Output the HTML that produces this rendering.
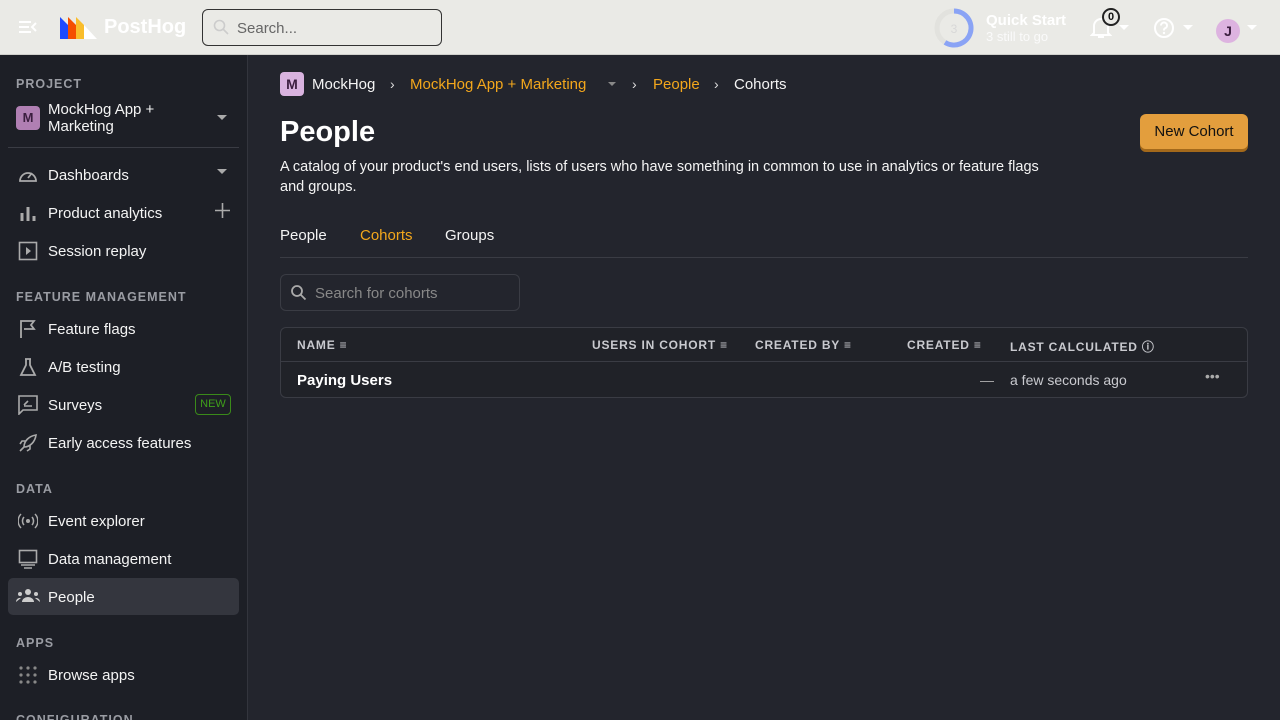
<!DOCTYPE html>
<html><head><meta charset="utf-8"><style>
*{box-sizing:border-box;margin:0;padding:0}
html,body{width:1280px;height:720px;overflow:hidden}
body{background:#23252d;font-family:"Liberation Sans",sans-serif;color:#f4f4f4;position:relative}
.top{position:absolute;left:0;top:0;width:1280px;height:55px;background:#eaeae6;border-bottom:1px solid #d0d0cc}
.side{position:absolute;left:0;top:55px;width:248px;height:665px;background:#1d1f26;border-right:1px solid #33353d}
.a{position:absolute;white-space:nowrap}
.sec{font-size:12.5px;font-weight:bold;letter-spacing:1px;color:#9a9ca3}
.it{font-size:15px;color:#f4f4f4}
.ic{position:absolute;left:18px;width:20px;height:20px}
.th{font-size:12px;font-weight:bold;letter-spacing:.8px;color:#c9cacf}
</style></head><body>
<div class="top">
 <svg class="a" style="left:18px;top:18px" width="20" height="18" viewBox="0 0 20 18"><path d="M1 4h12M1 9h10M1 14h12M18 5l-4 4 4 4" stroke="#fff" stroke-width="2" fill="none"/></svg>
 <svg class="a" style="left:60px;top:17px" width="38" height="22" viewBox="0 0 38 22"><path d="M0 0l8 8v14H0z" fill="#1d4aff"/><path d="M8 0l8 8v14H8z" fill="#f54e00"/><path d="M16 0l8 8v14h-8z" fill="#f9bd2b"/><path d="M24 8l13 14H24z" fill="#fff"/></svg>
 <div class="a" style="left:104px;top:16px;font-size:20px;font-weight:bold;color:#fff">PostHog</div>
 <div class="a" style="left:202px;top:9px;width:240px;height:37px;border:1px solid #333;border-radius:6px"></div>
 <svg class="a" style="left:213px;top:19px" width="16" height="16" viewBox="0 0 16 16"><circle cx="6.5" cy="6.5" r="5" stroke="#ccc" stroke-width="1.6" fill="none"/><path d="M10 10l5 5" stroke="#ccc" stroke-width="1.6"/></svg>
 <div class="a" style="left:237px;top:20px;font-size:15px;color:#666">Search...</div>
 <svg class="a" style="left:934px;top:8px" width="40" height="40" viewBox="0 0 40 40"><circle cx="20" cy="20" r="17" stroke="#e2e2de" stroke-width="5" fill="none"/><path d="M20 3A17 17 0 1 1 11 34.4" stroke="#8aa3f5" stroke-width="5" fill="none"/><text x="20" y="25" font-size="12" fill="#d8d8d8" text-anchor="middle" font-family="Liberation Sans">3</text></svg>
 <div class="a" style="left:986px;top:12px;font-size:15px;font-weight:bold;color:#fff">Quick Start</div>
 <div class="a" style="left:986px;top:29px;font-size:13px;color:#fafafa">3 still to go</div>
 <svg class="a" style="left:1090px;top:16px" width="22" height="24" viewBox="0 0 22 24"><path d="M4 17V10a7 7 0 0 1 14 0v7l2 2H2z M8 21h6" stroke="#fff" stroke-width="2" fill="none"/></svg>
 <div class="a" style="left:1102px;top:8px;width:18px;height:18px;border-radius:50%;background:#eaeae6;border:2px solid #222;font-size:11px;font-weight:bold;color:#111;text-align:center;line-height:14px">0</div>
 <div class="a" style="left:1119px;top:25px;border:5px solid transparent;border-top-color:#fff"></div>
 <svg class="a" style="left:1153px;top:17px" width="22" height="22" viewBox="0 0 22 22"><circle cx="11" cy="11" r="9" stroke="#fff" stroke-width="2" fill="none"/><path d="M8 8.5a3 3 0 1 1 4 2.8c-1 .4-1 1-1 2.2" stroke="#fff" stroke-width="2" fill="none"/><circle cx="11" cy="16" r="1.2" fill="#fff"/></svg>
 <div class="a" style="left:1183px;top:25px;border:5px solid transparent;border-top-color:#fff"></div>
 <div class="a" style="left:1216px;top:19px;width:24px;height:24px;border-radius:50%;background:#ddb3e0;color:#3b1e3f;font-size:14px;font-weight:bold;text-align:center;line-height:24px">J</div>
 <div class="a" style="left:1247px;top:25px;border:5px solid transparent;border-top-color:#fff"></div>
</div>

<div class="side">
 <div class="a sec" style="left:16px;top:22px">PROJECT</div>
 <div class="a" style="left:16px;top:51px;width:24px;height:24px;border-radius:4px;background:#b07fb3;color:#3b1e3f;font-size:13px;font-weight:bold;text-align:center;line-height:24px">M</div>
 <div class="a it" style="left:48px;top:46px;line-height:17px">MockHog App +<br>Marketing</div>
 <div class="a" style="left:217px;top:60px;border:5px solid transparent;border-top-color:#aaa"></div>
 <div class="a" style="left:8px;top:92px;width:231px;height:1px;background:#3a3c44"></div>
 <svg class="ic" style="top:110px" viewBox="0 0 20 20"><path d="M2 16a8 8 0 1 1 16 0z" stroke="#aaa" stroke-width="1.8" fill="none"/><path d="M10 13l4-5" stroke="#aaa" stroke-width="1.8"/></svg>
 <div class="a it" style="left:48px;top:112px">Dashboards</div>
 <div class="a" style="left:217px;top:114px;border:5px solid transparent;border-top-color:#aaa"></div>
 <svg class="ic" style="top:148px" viewBox="0 0 20 20"><path d="M4 18V10M10 18V4M16 18v-5" stroke="#aaa" stroke-width="3"/></svg>
 <div class="a it" style="left:48px;top:150px">Product analytics</div>
 <svg class="a" style="left:214px;top:147px" width="17" height="17" viewBox="0 0 17 17"><path d="M8.5 1v15M1 8.5h15" stroke="#aaa" stroke-width="1.6"/></svg>
 <svg class="ic" style="top:186px" viewBox="0 0 20 20"><rect x="1.5" y="1.5" width="17" height="17" stroke="#aaa" stroke-width="1.6" fill="none"/><path d="M8 6v8l5-4z" fill="#aaa"/></svg>
 <div class="a it" style="left:48px;top:188px">Session replay</div>
 <div class="a sec" style="left:16px;top:235px">FEATURE MANAGEMENT</div>
 <svg class="ic" style="top:264px" viewBox="0 0 20 20"><path d="M3 19V2h13l-3 4 3 4H6" stroke="#aaa" stroke-width="1.8" fill="none"/></svg>
 <div class="a it" style="left:48px;top:266px">Feature flags</div>
 <svg class="ic" style="top:302px" viewBox="0 0 20 20"><path d="M7 2h6M8 2v6L3 18h14L12 8V2" stroke="#aaa" stroke-width="1.8" fill="none"/></svg>
 <div class="a it" style="left:48px;top:304px">A/B testing</div>
 <svg class="ic" style="top:340px" viewBox="0 0 20 20"><path d="M1 1h18v14H5l-4 4z" stroke="#aaa" stroke-width="1.6" fill="none"/><path d="M6 10l4-4M6 11h8" stroke="#aaa" stroke-width="1.6"/></svg>
 <div class="a it" style="left:48px;top:342px">Surveys</div>
 <div class="a" style="left:195px;top:339px;width:36px;height:21px;border:1px solid #3a8a1a;border-radius:4px;color:#3f9e1a;font-size:11px;text-align:center;line-height:19px">NEW</div>
 <svg class="ic" style="top:378px" viewBox="0 0 20 20"><path d="M6 14c0-6 5-11 12-12-1 7-6 12-12 12zM6 14l-4 4M8 8H4l-2 3M12 12v4l-3 2" stroke="#aaa" stroke-width="1.6" fill="none"/></svg>
 <div class="a it" style="left:48px;top:380px">Early access features</div>
 <div class="a sec" style="left:16px;top:427px">DATA</div>
 <svg class="ic" style="top:456px" viewBox="0 0 20 20"><circle cx="10" cy="10" r="2" fill="#aaa"/><path d="M6 6a6 6 0 0 0 0 8M14 6a6 6 0 0 1 0 8M3 3a10 10 0 0 0 0 14M17 3a10 10 0 0 1 0 14" stroke="#aaa" stroke-width="1.5" fill="none"/></svg>
 <div class="a it" style="left:48px;top:458px">Event explorer</div>
 <svg class="ic" style="top:494px" viewBox="0 0 20 20"><rect x="1.5" y="1.5" width="17" height="12" stroke="#aaa" stroke-width="1.6" fill="none"/><path d="M3 16h14M6 19h8" stroke="#aaa" stroke-width="1.6"/></svg>
 <div class="a it" style="left:48px;top:496px">Data management</div>
 <div class="a" style="left:8px;top:523px;width:231px;height:37px;background:#34363e;border-radius:5px"></div>
 <svg class="a" style="left:16px;top:532px" width="24" height="18" viewBox="0 0 24 18"><circle cx="12" cy="5" r="3" fill="#ccc"/><circle cx="4" cy="7" r="2" fill="#ccc"/><circle cx="20" cy="7" r="2" fill="#ccc"/><path d="M6 15a6 5 0 0 1 12 0zM0 15a4 4 0 0 1 5-4M24 15a4 4 0 0 0-5-4" fill="#ccc"/></svg>
 <div class="a it" style="left:48px;top:534px">People</div>
 <div class="a sec" style="left:16px;top:581px">APPS</div>
 <svg class="ic" style="top:610px" viewBox="0 0 20 20" fill="#888"><circle cx="3" cy="3" r="1.6"/><circle cx="10" cy="3" r="1.6"/><circle cx="17" cy="3" r="1.6"/><circle cx="3" cy="10" r="1.6"/><circle cx="10" cy="10" r="1.6"/><circle cx="17" cy="10" r="1.6"/><circle cx="3" cy="17" r="1.6"/><circle cx="10" cy="17" r="1.6"/><circle cx="17" cy="17" r="1.6"/></svg>
 <div class="a it" style="left:48px;top:612px">Browse apps</div>
 <div class="a sec" style="left:16px;top:658px">CONFIGURATION</div>
</div>

<div class="a" style="left:280px;top:72px;width:24px;height:24px;border-radius:4px;background:#d9b3df;color:#3b1e3f;font-size:14px;font-weight:bold;text-align:center;line-height:24px">M</div>
<div class="a" style="left:312px;top:76px;font-size:15px">MockHog</div>
<div class="a" style="left:390px;top:76px;font-size:14px;color:#ddd">›</div>
<div class="a" style="left:410px;top:76px;font-size:15px;color:#f3a71c">MockHog App + Marketing</div>
<div class="a" style="left:608px;top:82px;border:4px solid transparent;border-top-color:#888"></div>
<div class="a" style="left:632px;top:76px;font-size:14px;color:#ddd">›</div>
<div class="a" style="left:653px;top:76px;font-size:15px;color:#f3a71c">People</div>
<div class="a" style="left:714px;top:76px;font-size:14px;color:#ddd">›</div>
<div class="a" style="left:734px;top:76px;font-size:15px">Cohorts</div>
<div class="a" style="left:280px;top:116px;font-size:29px;font-weight:bold;color:#fff">People</div>
<div class="a" style="left:280px;top:157px;font-size:14.5px;line-height:20px;white-space:normal;width:760px">A catalog of your product's end users, lists of users who have something in common to use in analytics or feature flags and groups.</div>
<div class="a" style="left:1140px;top:114px;width:108px;height:35px;background:#e39e3d;border-radius:6px;box-shadow:0 3px 0 #a3691b;color:#111;font-size:15px;text-align:center;line-height:35px">New Cohort</div>
<div class="a" style="left:280px;top:227px;font-size:15px">People</div>
<div class="a" style="left:360px;top:227px;font-size:15px;color:#f3a71c">Cohorts</div>
<div class="a" style="left:445px;top:227px;font-size:15px">Groups</div>
<div class="a" style="left:280px;top:257px;width:968px;height:1px;background:#3a3c44"></div>
<div class="a" style="left:280px;top:274px;width:240px;height:37px;border:1px solid #3a3c44;border-radius:6px"></div>
<svg class="a" style="left:290px;top:284px" width="17" height="17" viewBox="0 0 17 17"><circle cx="7" cy="7" r="5" stroke="#aaa" stroke-width="1.8" fill="none"/><path d="M10.5 10.5l5 5" stroke="#aaa" stroke-width="1.8"/></svg>
<div class="a" style="left:315px;top:285px;font-size:15px;color:#888">Search for cohorts</div>
<div class="a" style="left:280px;top:327px;width:968px;height:71px;border:1px solid #3a3c44;border-radius:6px;background:#202228"></div>
<div class="a" style="left:281px;top:361px;width:966px;height:1px;background:#3a3c44"></div>
<div class="a th" style="left:297px;top:338px">NAME ≡</div>
<div class="a th" style="left:592px;top:338px">USERS IN COHORT ≡</div>
<div class="a th" style="left:755px;top:338px">CREATED BY ≡</div>
<div class="a th" style="left:907px;top:338px">CREATED ≡</div>
<div class="a th" style="left:1010px;top:338px">LAST CALCULATED ⓘ</div>
<div class="a" style="left:297px;top:372px;font-size:15px;font-weight:bold;color:#fff">Paying Users</div>
<div class="a" style="left:980px;top:372px;font-size:14px;color:#aaa">—</div>
<div class="a" style="left:1010px;top:372px;font-size:14px;color:#c9cacf">a few seconds ago</div>
<div class="a" style="left:1205px;top:368px;font-size:14px;color:#aaa">•••</div>
</body></html>
